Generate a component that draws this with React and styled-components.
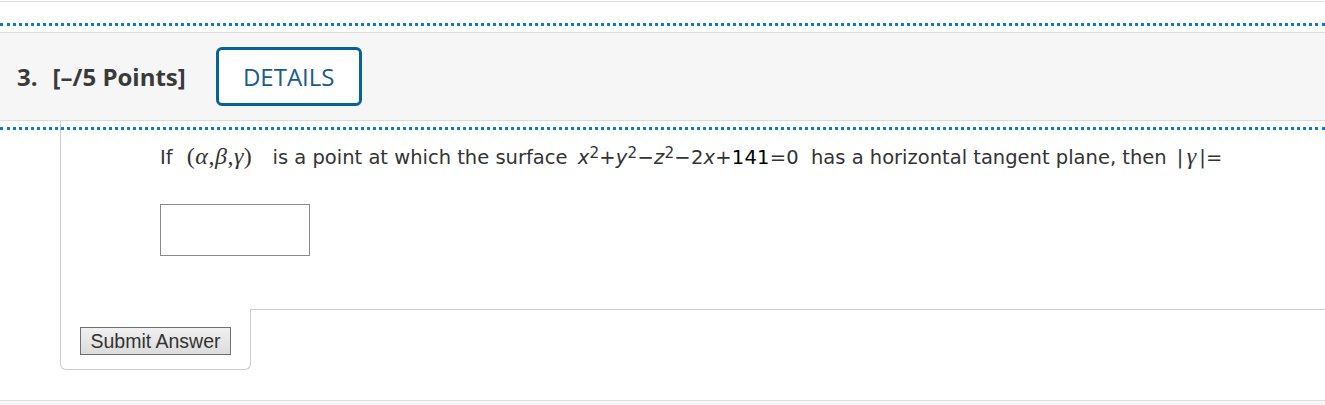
import React from "react";
import styled, { createGlobalStyle } from "styled-components";

const Global = createGlobalStyle`
  html, body { margin: 0; padding: 0; background: #fff; overflow: hidden; }
  body { width: 1325px; height: 405px; }
`;

const Page = styled.div`
  display: flex;
  flex-direction: column;
  height: 405px;
  overflow: hidden;
`;

const TopRule = styled.div`
  margin-top: 1px;
  border-top: 1px solid #dedede;
  height: 21px;
`;

const FocusBand = styled.div`
  border-top: 3px dotted #0a7ad9;
  border-bottom: 3px dotted #0a7ad9;
  padding: 6px 0;
  margin-bottom: -9px;
  position: relative;
  z-index: 2;
  pointer-events: none;
`;

const Header = styled.div`
  display: flex;
  align-items: center;
  height: 87px;
  background: #f6f6f6;
  border-top: 1px solid #dcdcdc;
  border-bottom: 1px solid #dcdcdc;
  padding-left: 17px;
  font-family: "Open Sans", sans-serif;
  pointer-events: auto;
`;

const Title = styled.h2`
  margin: 0;
  font-size: 24px;
  font-weight: 700;
  color: #3a3a3a;
  display: flex;
  gap: 15px;
`;

const DetailsButton = styled.button`
  margin-left: 30px;
  width: 146px;
  height: 59px;
  border: 3px solid #04639b;
  border-radius: 6px;
  background: #fff;
  color: #1a5b8e;
  font-family: "Open Sans", sans-serif;
  font-size: 24px;
  font-weight: 400;
  padding: 0;
  cursor: pointer;
`;

const Spacer = styled.div`
  height: 9px;
`;

const Panel = styled.div`
  margin-left: 60px;
  border-left: 1px solid #cccccc;
  padding: 16px 0 53px 99px;
  margin-top: -9px;
`;

const Question = styled.p`
  margin: 0;
  font-family: "DejaVu Sans", Verdana, sans-serif;
  font-size: 19.5px;
  line-height: 28px;
  height: 28px;
  color: #333;
  white-space: nowrap;
  padding-top: 7px;
`;

const MathSerif = styled.span`
  font-family: "Liberation Serif", "DejaVu Serif", serif;
  font-size: 24px;
  line-height: 20px;
  margin: 0 ${(p) => p.$right || 4}px 0 ${(p) => p.$left || 4}px;
  letter-spacing: 0.5px;
  i { font-style: italic; }
`;

const MathSans = styled.span`
  margin: 0 ${(p) => p.$right || 4}px 0 4px;
  letter-spacing: 0.2px;
  i { font-style: italic; }
  sup { font-size: 0.78em; line-height: 0; vertical-align: 0.42em; }
`;

const Greek = styled.i`
  font-family: "Liberation Serif", "DejaVu Serif", serif;
  font-size: 24px;
  line-height: 20px;
  font-style: italic;
  margin: 0 3px;
`;

const Rand = styled.span`
  color: #000;
`;

const AnswerBox = styled.input`
  display: block;
  margin-top: 32px;
  width: 150px;
  height: 52px;
  box-sizing: border-box;
  border: 1px solid #8a8a8a;
  border-radius: 0;
  background: #fff;
  padding: 0 6px;
  font-size: 18px;
`;

const Footer = styled.div`
  display: flex;
  align-items: flex-start;
`;

const SubmitCell = styled.div`
  margin-left: 60px;
  width: 191px;
  height: 61px;
  border-left: 1px solid #cccccc;
  border-right: 1px solid #cccccc;
  border-bottom: 1px solid #cccccc;
  border-radius: 0 0 6px 6px;
  padding: 18px 0 0 19px;
  box-sizing: border-box;
`;

const SubmitButton = styled.button`
  width: 151px;
  height: 28px;
  box-sizing: border-box;
  border: 1px solid #707070;
  border-radius: 0;
  background: linear-gradient(#f0f0f0, #dcdcdc);
  font-family: "Liberation Sans", Arial, sans-serif;
  font-size: 19.5px;
  color: #333;
  padding: 0;
  line-height: 26px;
`;

const RightEdge = styled.div`
  flex: 1;
  border-top: 1px solid #cccccc;
`;

const PageFoot = styled.div`
  margin-top: 30px;
  flex: 1;
  border-top: 1px solid #dedede;
  background: linear-gradient(#fafafa, #f4f4f4);
`;

export default function App() {
  return (
    <Page>
      <Global />
      <TopRule />
      <FocusBand>
        <Header>
          <Title>
            <span>3.</span>
            <span>[–/5 Points]</span>
          </Title>
          <DetailsButton>DETAILS</DetailsButton>
        </Header>
      </FocusBand>
      <Spacer />
      <Panel>
        <Question>
          If{" "}
          <MathSerif $left={8} $right={14}>
            (<i>α</i>,<i>β</i>,<i>γ</i>)
          </MathSerif>{" "}
          is a point at which the surface{" "}
          <MathSans $right={6}>
            <i>x</i><sup>2</sup>+<i>y</i><sup>2</sup>−<i>z</i><sup>2</sup>−2<i>x</i>+<Rand>141</Rand>=0
          </MathSans>{" "}
          has a horizontal tangent plane, then{" "}
          <MathSans>
            |<Greek>γ</Greek>|=
          </MathSans>
        </Question>
        <AnswerBox type="text" aria-label="answer" />
      </Panel>
      <Footer>
        <SubmitCell>
          <SubmitButton>Submit Answer</SubmitButton>
        </SubmitCell>
        <RightEdge />
      </Footer>
      <PageFoot />
    </Page>
  );
}
